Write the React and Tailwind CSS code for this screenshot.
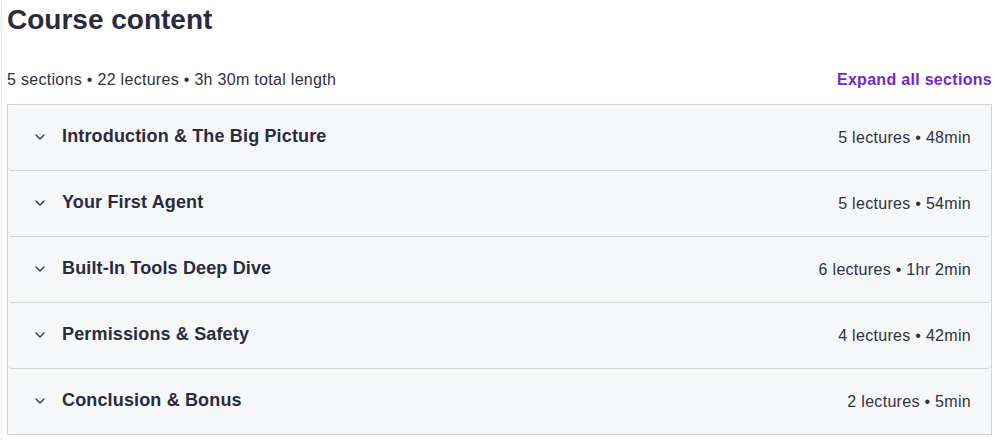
import React from 'react';
import { ChevronDown } from 'lucide-react';

const sections = [
  { title: 'Introduction & The Big Picture', meta: '5 lectures • 48min' },
  { title: 'Your First Agent', meta: '5 lectures • 54min' },
  { title: 'Built-In Tools Deep Dive', meta: '6 lectures • 1hr 2min' },
  { title: 'Permissions & Safety', meta: '4 lectures • 42min' },
  { title: 'Conclusion & Bonus', meta: '2 lectures • 5min' },
];

export default function App() {
  return (
    <div
      className="w-[996px] h-[440px] bg-white overflow-hidden"
      style={{ fontFamily: '"Liberation Sans", Arial, sans-serif' }}
    >
      <div className="ml-px h-full border-l border-[#e9e9ec] pl-[5px] pr-[4px]">
        <h2 className="text-[28px] leading-[40px] font-bold text-[#2a2b3f]">Course content</h2>

        <div className="mt-[26px] flex items-center justify-between h-[28px]">
          <span className="text-[16px] tracking-[0.3px] text-[#303141]">5 sections • 22 lectures • 3h 30m total length</span>
          <button className="text-[16px] tracking-[0.3px] font-bold text-[#6d28d2]">Expand all sections</button>
        </div>

        <div className="mt-[10px] border border-[#d1d2e0]">
          {sections.map((s, i) => (
            <div
              key={s.title}
              className={`h-[65px] flex items-center bg-[#f6f7f9] rounded-[4px] pl-[24px] pr-[20px] ${i < sections.length - 1 ? 'border-b border-[#d1d2e0] h-[66px]' : ''}`}
            >
              <ChevronDown size={16} strokeWidth={2} className="text-[#303141] mr-[14px] -mt-[2px]" />
              <span className="text-[18px] tracking-[0.15px] font-bold text-[#2a2b3f] -mt-[3px]">{s.title}</span>
              <span className="ml-auto text-[16px] tracking-[0.3px] text-[#303141]">{s.meta}</span>
            </div>
          ))}
        </div>
      </div>
    </div>
  );
}
